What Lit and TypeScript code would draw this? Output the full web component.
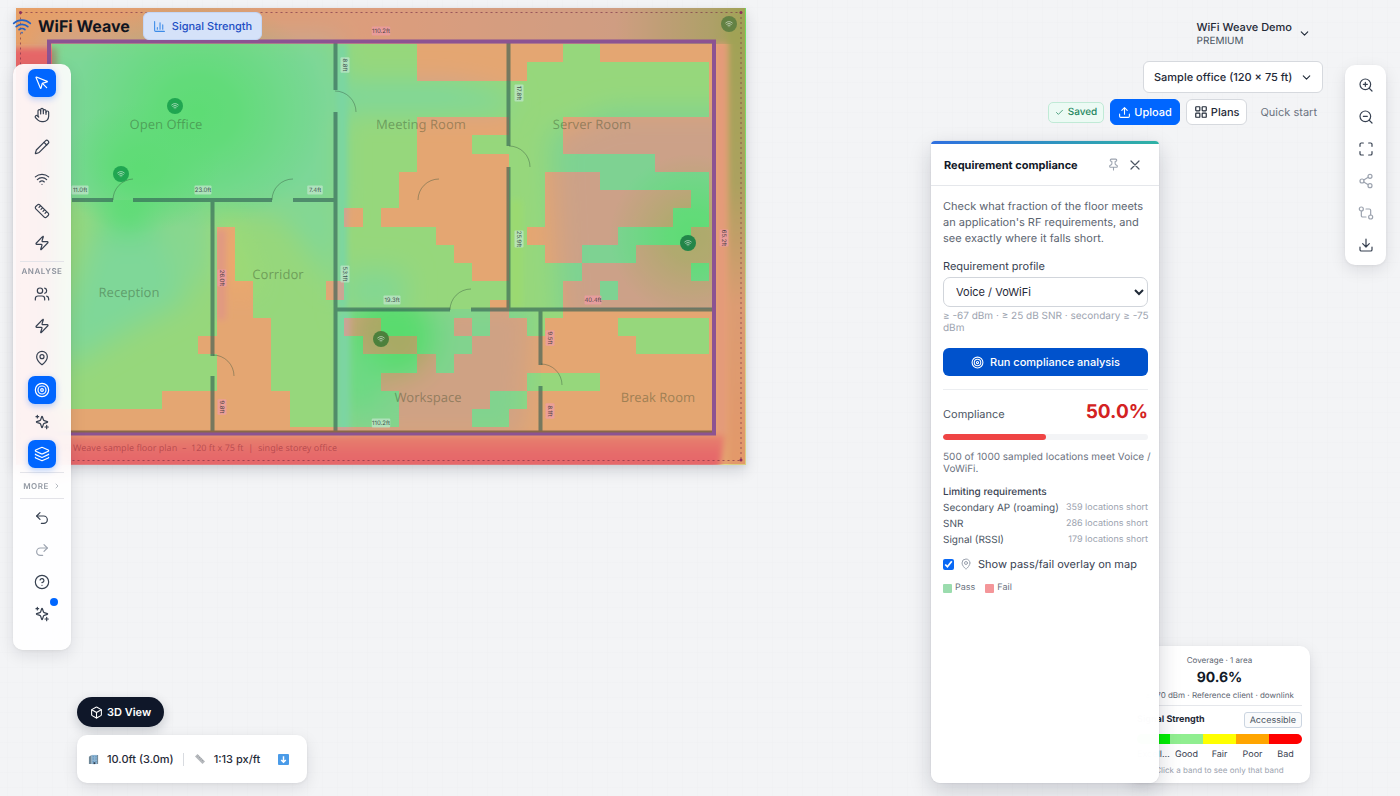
import { LitElement, html, css, svg } from "lit";
import { customElement, property, state } from "lit/decorators.js";
import { classMap } from "lit/directives/class-map.js";

const wifi = svg`<path d="M12 20h.01"/><path d="M2 8.82a15 15 0 0 1 20 0"/><path d="M5 12.86a10 10 0 0 1 14 0"/><path d="M8.5 16.43a5 5 0 0 1 7 0"/>`;

const ICONS: Record<string, unknown> = {
  pointer: svg`<path d="M12.6 12.6 19 19"/><path d="M3.7 3.04a.5.5 0 0 0-.65.65l6.5 16a.5.5 0 0 0 .95-.06l1.57-6.09a2 2 0 0 1 1.45-1.44l6.13-1.58a.5.5 0 0 0 .06-.95z"/>`,
  hand: svg`<path d="M18 11V6a2 2 0 0 0-4 0"/><path d="M14 10V4a2 2 0 0 0-4 0v2"/><path d="M10 10.5V6a2 2 0 0 0-4 0v8"/><path d="M18 8a2 2 0 1 1 4 0v6a8 8 0 0 1-8 8h-2c-2.8 0-4.5-.86-5.99-2.34l-3.6-3.6a2 2 0 0 1 2.83-2.82L7 15"/>`,
  pencil: svg`<path d="M21.17 6.81a1 1 0 0 0-3.99-3.99L3.84 16.17a2 2 0 0 0-.5.83l-1.32 4.35a.5.5 0 0 0 .62.62l4.35-1.32a2 2 0 0 0 .83-.5z"/><path d="m15 5 4 4"/>`,
  wifi,
  ruler: svg`<path d="M2.7 8.7a2.4 2.4 0 0 1 0-3.4l2.6-2.6a2.4 2.4 0 0 1 3.4 0l12.6 12.6a2.4 2.4 0 0 1 0 3.4l-2.6 2.6a2.4 2.4 0 0 1-3.4 0Z"/><path d="m9.5 4.5-2 2M12.5 7.5l-2 2M15.5 10.500l-2 2M18.500 13.500l-2 2"/>`,
  zap: svg`<path d="M4 14a1 1 0 0 1-.78-1.63l9.9-10.2a.5.5 0 0 1 .86.46l-1.92 6.02A1 1 0 0 0 13 10h7a1 1 0 0 1 .78 1.63l-9.9 10.2a.5.5 0 0 1-.86-.46l1.92-6.02A1 1 0 0 0 11 14z"/>`,
  users: svg`<path d="M16 21v-2a4 4 0 0 0-4-4H6a4 4 0 0 0-4 4v2"/><circle cx="9" cy="7" r="4"/><path d="M22 21v-2a4 4 0 0 0-3-3.87M16 3.13a4 4 0 0 1 0 7.75"/>`,
  pin: svg`<path d="M20 10c0 5-5.54 10.2-7.4 11.8a1 1 0 0 1-1.2 0C9.54 20.2 4 15 4 10a8 8 0 0 1 16 0"/><circle cx="12" cy="10" r="3"/>`,
  target: svg`<circle cx="12" cy="12" r="10"/><circle cx="12" cy="12" r="6"/><circle cx="12" cy="12" r="2"/>`,
  sparkles: svg`<path d="M12 3.5c.4 0 .5.3.6.6l1.500 4.600a2 2 0 0 0 1.300 1.300l4.600 1.500c.6.2.6.9 0 1.100l-4.600 1.500a2 2 0 0 0-1.300 1.300l-1.500 4.600c-.2.6-.9.6-1.100 0L10 15.400a2 2 0 0 0-1.300-1.300l-4.600-1.500c-.6-.2-.6-.9 0-1.100L8.700 10A2 2 0 0 0 10 8.700l1.500-4.600c.1-.3.3-.6.5-.6z"/><path d="M5 2v4M3 4h4M19 17v5M16.500 19.500h5"/>`,
  layers: svg`<path d="M12.83 2.18a2 2 0 0 0-1.66 0L2.6 6.08a1 1 0 0 0 0 1.83l8.58 3.91a2 2 0 0 0 1.66 0l8.58-3.9a1 1 0 0 0 0-1.83z"/><path d="M2 12a1 1 0 0 0 .58.91l8.6 3.91a2 2 0 0 0 1.65 0l8.58-3.9A1 1 0 0 0 22 12"/><path d="M2 17a1 1 0 0 0 .58.91l8.6 3.91a2 2 0 0 0 1.65 0l8.58-3.9A1 1 0 0 0 22 17"/>`,
  undo: svg`<path d="M9 14 4 9l5-5"/><path d="M4 9h10.500a5.500 5.500 0 0 1 0 11H11"/>`,
  redo: svg`<path d="m15 14 5-5-5-5"/><path d="M20 9H9.500a5.500 5.500 0 0 0 0 11H13"/>`,
  help: svg`<circle cx="12" cy="12" r="10"/><path d="M9.090 9a3 3 0 0 1 5.830 1c0 2-3 3-3 3M12 17h.01"/>`,
  zoomIn: svg`<circle cx="11" cy="11" r="8"/><path d="m21 21-4.350-4.350M11 8v6M8 11h6"/>`,
  zoomOut: svg`<circle cx="11" cy="11" r="8"/><path d="m21 21-4.350-4.350M8 11h6"/>`,
  fit: svg`<path d="M8 3H5a2 2 0 0 0-2 2v3M21 8V5a2 2 0 0 0-2-2h-3M3 16v3a2 2 0 0 0 2 2h3M16 21h3a2 2 0 0 0 2-2v-3"/>`,
  share: svg`<circle cx="18" cy="5" r="3"/><circle cx="6" cy="12" r="3"/><circle cx="18" cy="19" r="3"/><path d="m8.590 13.510 6.830 3.980M15.410 6.510l-6.820 3.980"/>`,
  compare: svg`<circle cx="5" cy="6" r="3"/><path d="M12 6h5a2 2 0 0 1 2 2v7"/><circle cx="19" cy="18" r="3"/><path d="M12 18H7a2 2 0 0 1-2-2V9"/>`,
  download: svg`<path d="M12 15V3M7 10l5 5 5-5M21 15v4a2 2 0 0 1-2 2H5a2 2 0 0 1-2-2v-4"/>`,
  upload: svg`<path d="M12 3v12M17 8l-5-5-5 5M21 15v4a2 2 0 0 1-2 2H5a2 2 0 0 1-2-2v-4"/>`,
  grid: svg`<rect x="3" y="3" width="7" height="7" rx="1"/><rect x="14" y="3" width="7" height="7" rx="1"/><rect x="14" y="14" width="7" height="7" rx="1"/><rect x="3" y="14" width="7" height="7" rx="1"/>`,
  check: svg`<path d="M20 6 9 17l-5-5"/>`,
  down: svg`<path d="m6 9 6 6 6-6"/>`,
  right: svg`<path d="m9 18 6-6-6-6"/>`,
  close: svg`<path d="M18 6 6 18M6 6l12 12"/>`,
  tack: svg`<path d="M12 17v5M9 10.760a2 2 0 0 1-1.110 1.790l-1.780.9A2 2 0 0 0 5 15.240V16a1 1 0 0 0 1 1h12a1 1 0 0 0 1-1v-.76a2 2 0 0 0-1.110-1.790l-1.780-.9A2 2 0 0 1 15 10.760V7a1 1 0 0 1 1-1 2 2 0 0 0 0-4H8a2 2 0 0 0 0 4 1 1 0 0 1 1 1z"/>`,
  chart: svg`<path d="M3 3v16a2 2 0 0 0 2 2h16M18 17V9M13 17V5M8 17v-3"/>`,
  cube: svg`<path d="M21 8a2 2 0 0 0-1-1.730l-7-4a2 2 0 0 0-2 0l-7 4A2 2 0 0 0 3 8v8a2 2 0 0 0 1 1.730l7 4a2 2 0 0 0 2 0l7-4A2 2 0 0 0 21 16Z"/><path d="m3.300 7 8.700 5 8.700-5M12 22V12"/>`,
};

const icon = (name: string, size = 16, weight = 2) =>
  html`<svg width=${size} height=${size} viewBox="0 0 24 24" fill="none" stroke="currentColor" stroke-width=${weight} stroke-linecap="round" stroke-linejoin="round" aria-hidden="true">${ICONS[name]}</svg>`;

/* Sampled grid: each row lists the [from, to) column ranges that miss the profile. */
const CELL = 18.25;
const GRID_X = 52.4;
const GRID_Y = 44;
const COLS = 36;
const FAILING: number[][][] = [
  [[20, 28], [30, 36]],
  [[20, 26]],
  [],
  [],
  [[20, 25], [28, 36]],
  [[20, 23], [28, 36]],
  [[20, 25], [33, 36]],
  [[19, 25], [27, 30]],
  [[19, 25], [27, 35]],
  [[16, 17], [18, 25], [27, 34]],
  [[9, 10], [21, 25], [26, 31], [35, 36]],
  [[9, 10], [22, 25], [27, 29], [32, 36]],
  [[9, 10], [23, 25], [29, 35]],
  [[9, 11], [15, 16], [28, 30], [31, 36]],
  [[9, 11], [24, 25], [28, 36]],
  [[9, 12], [16, 18], [22, 23], [24, 26], [27, 31]],
  [[8, 12], [17, 20], [23, 32]],
  [[9, 12], [20, 21], [22, 36]],
  [[9, 12], [18, 26], [30, 36]],
  [[6, 13], [19, 24], [26, 36]],
  [[0, 13], [19, 23], [25, 36]],
];

const passPath = FAILING.map((fails, row) => {
  const y = GRID_Y + row * CELL;
  let from = 0;
  let d = "";
  for (const [a, b] of [...fails, [COLS, COLS]]) {
    if (a > from) d += `M${GRID_X + from * CELL} ${y}h${(a - from) * CELL}v${CELL}h${-(a - from) * CELL}z`;
    from = b;
  }
  return d;
}).join("");

const ROOMS: [string, number, number][] = [
  ["Open Office", 166, 129],
  ["Meeting Room", 421, 129],
  ["Server Room", 592, 129],
  ["Reception", 129, 297],
  ["Corridor", 278, 279],
  ["Workspace", 428, 402],
  ["Break Room", 658, 402],
];

const DIMENSIONS: [string, number, number, boolean, boolean][] = [
  ["110.2ft", 381, 31, false, false],
  ["11.0ft", 80, 190, false, true],
  ["23.0ft", 203, 190, false, true],
  ["7.4ft", 315, 190, false, true],
  ["8.8ft", 345, 65, true, true],
  ["17.8ft", 519, 93, true, true],
  ["25.9ft", 519, 239, true, true],
  ["26.0ft", 222, 278, true, false],
  ["53.1ft", 345, 274, true, true],
  ["19.3ft", 392, 300, false, true],
  ["40.4ft", 593, 300, false, false],
  ["65.2ft", 724, 238, true, false],
  ["9.5ft", 550, 338, true, false],
  ["9.8ft", 222, 407, true, false],
  ["8.1ft", 550, 411, true, false],
  ["110.2ft", 381, 423, false, true],
];

const ACCESS_POINTS: [number, number, string][] = [
  [175, 106, "#20a651"],
  [121, 174, "#20a651"],
  [688, 243, "#228549"],
  [381, 339, "#4c803c"],
  [729, 24, "#638143"],
];

@customElement("floor-map")
class FloorMap extends LitElement {
  @property({ type: Boolean }) overlay = true;

  static styles = css`
    :host { display: block; box-shadow: 0 6px 14px rgba(15, 23, 42, .14), 0 2px 5px rgba(15, 23, 42, .06); }
    svg { display: block; text-rendering: geometricPrecision; }
    .room { font: 13px "Noto Sans", sans-serif; fill: rgba(45, 65, 35, .38); text-anchor: middle; }
    .note { font: 9px "Noto Sans", sans-serif; fill: rgba(120, 20, 40, .42); white-space: pre; }
    .dim { font: 6px Inter, sans-serif; fill: rgba(30, 40, 50, .8); text-anchor: middle; }
  `;

  render() {
    return html`<svg width="730" height="457" viewBox="16 8 730 457" role="img" aria-label="Floor plan with pass and fail overlay">
      <defs>
        <filter id="soft" x="-50%" y="-50%" width="200%" height="200%"><feGaussianBlur stdDeviation="14"/></filter>
        <filter id="fine" x="-50%" y="-50%" width="200%" height="200%"><feGaussianBlur stdDeviation="3"/></filter>
        <radialGradient id="strong"><stop offset="0" stop-color="#83ea83"/><stop offset=".3" stop-color="#83ea83" stop-opacity=".85"/><stop offset=".7" stop-color="#83ea83" stop-opacity=".35"/><stop offset="1" stop-color="#83ea83" stop-opacity="0"/></radialGradient>
        <linearGradient id="topBand"><stop offset="0" stop-color="#e2d87c"/><stop offset=".2" stop-color="#d8d48c"/><stop offset=".5" stop-color="#d0d4a0"/><stop offset=".82" stop-color="#bcd4a8"/><stop offset=".95" stop-color="#88d880"/><stop offset="1" stop-color="#70dc60"/></linearGradient>
        <linearGradient id="rightBand" x2="0" y2="1"><stop offset="0" stop-color="#70dc60"/><stop offset=".35" stop-color="#84da70"/><stop offset=".62" stop-color="#d0d290"/><stop offset="1" stop-color="#dccc80"/></linearGradient>
        <linearGradient id="lowBand" x2="0" y2="1"><stop offset="0" stop-color="#e0a888"/><stop offset=".45" stop-color="#e08082"/><stop offset="1" stop-color="#e07a7e"/></linearGradient>
        <clipPath id="server"><rect x="508" y="42" width="207" height="267"/></clipPath>
        <clipPath id="left"><rect x="50" y="200" width="285" height="234"/></clipPath>
        <clipPath id="work"><rect x="335" y="309" width="206" height="125"/></clipPath>
      </defs>
      <rect x="16" y="8" width="730" height="457" fill="#dee38e"/>
      <rect x="16" y="8" width="730" height="36" fill="url(#topBand)"/>
      <g filter="url(#soft)">
        <rect x="40" y="34" width="300" height="176" fill="#b4e2bb"/>
        <path d="M340 84h110l60 12v14H340z" fill="#b0e2c8"/>
        <path d="M345 270h60v42h-60z" fill="#bde2b4"/>
      </g>
      <g clip-path="url(#server)"><g filter="url(#soft)">
        <path d="M550 135l60-25h140v220H560z" fill="#b6dab2"/>
      </g></g>
      <g clip-path="url(#left)"><g filter="url(#soft)">
        <path d="M108 190h46l34 110-60 30L60 370V330z" fill="#b8e2bc"/>
        <path d="M270 200l70 90V200z" fill="#bde2b8"/>
        <path d="M106 186h44v48h-44z" fill="#83ea83"/>
        <path d="M216 190v90l40 10z" fill="#eee880"/>
        <path d="M50 190h30v50l-30 60z" fill="#dfe48c"/>
        <path d="M165 190h45v90h-25z" fill="#c4e2b0"/>
      </g></g>
      <g clip-path="url(#work)"><g filter="url(#soft)">
        <path d="M335 300h200l-10 140H335z" fill="#bcdcac"/>
        <circle cx="392" cy="336" r="44" fill="#7ce878"/>
        <path d="M340 350h40v60h-40z" fill="#98e69a"/>
      </g></g>
      <g clip-path="url(#server)"><circle cx="692" cy="236" r="82" fill="url(#strong)"/></g>
      <ellipse cx="198" cy="112" rx="130" ry="118" fill="url(#strong)"/>
      <ellipse cx="140" cy="168" rx="80" ry="66" fill="url(#strong)"/>
      <g filter="url(#fine)">
        <rect x="337" y="44" width="10" height="265" fill="#b0e0cc"/>
        <rect x="337" y="311" width="13" height="122" fill="#b4dfcc"/>
        <rect x="216" y="230" width="10" height="90" fill="#d8cca8"/>
        <rect x="510" y="200" width="12" height="108" fill="#e6e67c"/>
        <rect x="716" y="44" width="10" height="390" fill="#dfce9c"/>
        <rect x="728" y="26" width="26" height="450" fill="url(#rightBand)"/>
        <path d="M8 48H57V436H8z" fill="#e07c7f"/>
        <path d="M8 435H725L718 480H8z" fill="url(#lowBand)"/>
      </g>
      ${this.overlay
        ? svg`<g shape-rendering="crispEdges"><path d="M16 8H745V464H16z${passPath}" fill="#ef4444" fill-opacity=".38" fill-rule="evenodd"/><path d=${passPath} fill="#22c55e" fill-opacity=".38"/></g>`
        : null}
      <g fill="none" stroke="#2d5a52" stroke-opacity=".6" stroke-width="4">
        <path d="M335.500 43V90M335.500 112V431M72 200H113M133 200H272M293 200H335M212.500 200V356M212.500 376V431M508.500 43V146M508.500 167V309M337 309.500H450M471 309.500H714M540.500 311V365M540.500 386V431"/>
      </g>
      <g fill="none" stroke="#32503c" stroke-opacity=".4">
        <path d="M335 91a21 21 0 0 1 21 21M113 200a21 21 0 0 1 20-21M272 200a21 21 0 0 1 21-21M418 200a21 21 0 0 1 21-21M509 146a21 21 0 0 1 21 21M213 355a21 21 0 0 1 21 21M450 310a21 21 0 0 1 21-21M541 364a21 21 0 0 1 21 21"/>
      </g>
      <rect x="49" y="41.500" width="665" height="392" fill="none" stroke="#8c5392" stroke-width="4"/>
      <path d="M52 431.500H712" stroke="#8a6848" stroke-width="2"/>
      <rect x="20.500" y="12.500" width="720.500" height="448" fill="none" stroke="#7a3048" stroke-opacity=".65" stroke-dasharray="2 3"/>
      <g fill="#8c2f5c"><circle cx="20.500" cy="12.500" r="1.500"/><circle cx="741" cy="12.500" r="1.500"/><circle cx="741" cy="460" r="1.500"/></g>
      ${ROOMS.map(([name, x, y]) => svg`<text class="room" x=${x} y=${y}>${name}</text>`)}
      <text class="note" x="53" y="451">WiFi Weave sample floor plan  –  120 ft x 75 ft  |  single storey office</text>
      ${DIMENSIONS.map(([label, x, y, upright, pass]) => svg`<g transform="translate(${x} ${y})${upright ? " rotate(90)" : ""}">
        <rect x=${-4 - label.length * 0.75} y="-4.500" width=${8 + label.length * 1.5} height="9" rx="1" fill=${pass ? "#bfe6c9" : "#ee9ca4"} fill-opacity=".75"/>
        <text class="dim" y="2">${label}</text></g>`)}
      ${ACCESS_POINTS.map(([x, y, fill]) => svg`<g transform="translate(${x} ${y})">
        <circle r="8" fill=${fill}/>
        <g transform="translate(-4 -4) scale(.333)" fill="none" stroke="#fff" stroke-opacity=".65" stroke-width="2.400" stroke-linecap="round">${wifi}</g></g>`)}
    </svg>`;
  }
}

@customElement("compliance-panel")
class CompliancePanel extends LitElement {
  @property({ type: Boolean }) overlay = true;
  @property({ type: Number }) score = 50;

  static styles = css`
    :host { display: flex; flex-direction: column; background: rgba(255, 255, 255, .99); border-radius: 4px 4px 9px 9px; box-shadow: 0 8px 22px rgba(15, 23, 42, .18), 0 0 2px rgba(15, 23, 42, .12); overflow: hidden; color: #4b5563; font: 11px/16px Inter, sans-serif; }
    * { box-sizing: border-box; }
    .strip { height: 3px; background: linear-gradient(90deg, #2f6fe0, #2fb2a5); }
    header { display: flex; align-items: center; height: 42px; padding: 0 13px; border-bottom: 1px solid #e5e7eb; }
    h2 { flex: 1; margin: 0; font-size: 11px; font-weight: 700; color: #111827; }
    .tool { display: grid; place-items: center; width: 22px; height: 22px; padding: 0; border: 0; background: none; color: #9ca3af; }
    .tool.close { color: #4b5563; }
    .body { padding: 12px 11px 12px 12px; display: flex; flex-direction: column; }
    p { margin: 0; }
    .intro { color: #5b6470; }
    .label { margin-top: 12px; color: #374151; }
    .profile { height: 30px; margin-top: 3px; width: 100%; padding: 0 0 0 8px; border: 1px solid #d1d5db; border-radius: 7px; background: #fff; color: #1f2937; font: 11px Inter, sans-serif; }
    .small { margin-right: -6px; font-size: 10px; line-height: 12px; }
    .hint { margin-top: 3px; color: #9ca3af; }
    .run { display: flex; align-items: center; justify-content: center; gap: 6px; height: 28px; margin-top: 14px; border: 0; border-radius: 6px; background: #0052cc; color: #fff; font: 500 11px Inter, sans-serif; }
    .result { margin-top: 13px; padding-top: 10px; border-top: 1px solid #eceef1; }
    .row { display: flex; justify-content: space-between; align-items: baseline; white-space: nowrap; }
    .score { font-size: 19px; line-height: 24px; font-weight: 700; color: #d32222; }
    .bar { height: 6px; margin: 10px 0 11px; border-radius: 3px; background: #f3f4f6; overflow: hidden; }
    .fill { height: 6px; border-radius: 3px; background: #ef4444; }
    .meta { color: #6b7280; }
    .limits { margin-top: 9px; font-size: 10px; line-height: 16px; }
    .limits .row { align-items: center; }
    .limits h3 { margin: 0; font-size: 10px; line-height: 16px; font-weight: 500; color: #374151; }
    .short { font-size: 9px; color: #9ca3af; }
    .toggle { display: flex; align-items: center; gap: 6px; margin-top: 8px; color: #374151; white-space: nowrap; }
    .toggle svg { color: #9ca3af; }
    .toggle input { width: 11px; height: 11px; margin: 0; accent-color: #0969f5; }
    .legend { display: flex; gap: 10px; margin-top: 10px; font-size: 9px; line-height: 12px; color: #6b7280; }
    .legend span { display: flex; align-items: center; gap: 3px; }
    .legend i { width: 9px; height: 9px; border-radius: 1px; background: #9bdcae; }
    .legend .fail { background: #f49699; }
  `;

  private toggle(event: Event) {
    const detail = (event.target as HTMLInputElement).checked;
    this.dispatchEvent(new CustomEvent("overlay-change", { detail }));
  }

  render() {
    const limits = [["Secondary AP (roaming)", 359], ["SNR", 286], ["Signal (RSSI)", 179]];
    return html`
      <div class="strip"></div>
      <header>
        <h2>Requirement compliance</h2>
        <button class="tool" aria-label="Pin panel">${icon("tack", 13)}</button>
        <button class="tool close" aria-label="Close panel">${icon("close", 16, 1.8)}</button>
      </header>
      <div class="body">
        <p class="intro">Check what fraction of the floor meets an application's RF requirements, and see exactly where it falls short.</p>
        <label class="label" for="profile">Requirement profile</label>
        <select class="profile" id="profile"><option>Voice / VoWiFi</option></select>
        <p class="small hint">≥ -67 dBm · ≥ 25 dB SNR · secondary ≥ -75 dBm</p>
        <button class="run">${icon("target", 13)}Run compliance analysis</button>
        <section class="result">
          <div class="row"><span>Compliance</span><span class="score">${this.score.toFixed(1)}%</span></div>
          <div class="bar"><div class="fill" style="width:${this.score}%"></div></div>
          <p class="small meta">500 of 1000 sampled locations meet Voice / VoWiFi.</p>
          <div class="limits">
            <h3>Limiting requirements</h3>
            ${limits.map(([name, count]) => html`<div class="row"><span>${name}</span><span class="short">${count} locations short</span></div>`)}
          </div>
          <label class="toggle"><input type="checkbox" .checked=${this.overlay} @change=${this.toggle} />${icon("pin", 12)}Show pass/fail overlay on map</label>
          <div class="legend"><span><i></i>Pass</span><span><i class="fail"></i>Fail</span></div>
        </section>
      </div>`;
  }
}

@customElement("app-root")
class AppRoot extends LitElement {
  @state() private overlay = true;

  static styles = css`
    :host { display: block; position: relative; min-height: 100vh; overflow: hidden; color: #1f2937; font: 11px/16px Inter, sans-serif; text-rendering: geometricPrecision;
      background: linear-gradient(rgba(15, 23, 42, .009) 1px, transparent 1px) 0 7px / 15px 15px, linear-gradient(90deg, rgba(15, 23, 42, .009) 1px, transparent 1px) 7px 0 / 15px 15px, #f3f4f6; }
    * { box-sizing: border-box; }
    button, select { font: 500 11px Inter, sans-serif; color: inherit; text-rendering: inherit; }
    .map { position: absolute; left: 16px; top: 8px; }
    .brand { position: absolute; left: 12px; top: 12px; display: flex; align-items: center; }
    .brand > svg { color: #2563c4; }
    .brand h1 { margin: 0 13px 0 6px; font-size: 16px; line-height: 28px; font-weight: 700; color: #10151f; }
    .mode { display: flex; align-items: center; gap: 6px; height: 28px; padding: 0 9px; border: 1px solid #c3d6f6; border-radius: 6px; background: #d5e2f9; color: #1d4fc4; }
    .mode svg { color: #3b8be8; }

    .card { background: #fff; border-radius: 10px; box-shadow: 0 5px 16px rgba(15, 23, 42, .1), 0 1px 3px rgba(15, 23, 42, .06); }
    .rail { position: absolute; display: flex; flex-direction: column; align-items: center; gap: 4px; }
    .left { left: 13px; top: 64px; width: 58px; padding: 5px 0 22px; background: rgba(255, 255, 255, .91); backdrop-filter: blur(12px); }
    .right { right: 14px; top: 65px; width: 41px; padding: 6px 0; }
    .rail button { display: grid; place-items: center; position: relative; width: 28px; height: 28px; padding: 0; border: 0; border-radius: 7px; background: none; color: #374151; }
    .rail button.on { background: #0066ff; color: #fff; box-shadow: 0 2px 6px rgba(0, 102, 255, .3); }
    .rail button.dim { color: #9ca3af; }
    .rail hr { width: 44px; height: 1px; margin: 0; border: 0; background: #e3e3e8; }
    .group { font-size: 8px; line-height: 10px; font-weight: 600; letter-spacing: .5px; color: #8b919c; }
    .rail .more { display: flex; align-items: center; justify-content: center; gap: 4px; width: 44px; height: 17px; font: 600 8px Inter, sans-serif; letter-spacing: .5px; color: #9298a2; }
    .dot { position: absolute; right: -2px; top: -2px; width: 8px; height: 8px; border-radius: 50%; background: #0066ff; }
    .left hr.last { margin-bottom: 1px; }

    .top { position: absolute; right: 77px; top: 19px; display: flex; flex-direction: column; align-items: flex-end; gap: 6px; }
    .account { display: flex; align-items: center; gap: 6px; margin: 0 12px 8px 0; padding: 0; border: 0; background: none; text-align: left; line-height: 16px; }
    .account small { display: block; font-size: 10px; line-height: 12px; font-weight: 400; color: #4b5563; }
    .plan { position: relative; display: block; }
    .plan select { appearance: none; height: 32px; width: 180px; padding: 0 10px 0 10px; border: 1px solid #d6d9de; border-radius: 6px; background: #fff; }
    .plan svg { position: absolute; right: 10px; top: 10px; pointer-events: none; }
    .actions { display: flex; align-items: center; gap: 6px; }
    .saved { display: flex; align-items: center; gap: 4px; height: 21px; padding: 0 6px; border: 1px solid #c0ead6; border-radius: 5px; background: #ecfaf4; color: #24875f; font-size: 10px; font-weight: 500; }
    .actions button { display: flex; align-items: center; gap: 3px; height: 26px; padding: 0 7px; border: 1px solid #d6d9de; border-radius: 6px; background: #fff; }
    .actions button.primary { background: #0066ff; border-color: #0066ff; color: #fff; }
    .actions a { padding: 0 6px 0 7px; color: #6b7280; text-decoration: none; }

    .panel { position: absolute; right: 241px; top: 141px; bottom: 13px; width: 228px; }
    .coverage { position: absolute; right: 90px; bottom: 13px; width: 181px; padding: 8px 8px 7px; text-align: center; }
    .coverage p { margin: 0; font-size: 8px; line-height: 12px; color: #5b6470; white-space: nowrap; }
    .coverage strong { display: block; font-size: 14px; line-height: 23px; font-weight: 700; color: #111827; }
    .coverage header { display: flex; align-items: center; justify-content: space-between; margin: 4px 0 6px; padding-top: 6px; border-top: 1px solid #e5e7eb; font-size: 9px; font-weight: 700; }
    .coverage header button { height: 16px; padding: 0 5px; border: 1px solid #cbd5e1; border-radius: 3px; background: #fafbfc; color: #4b5563; font-size: 9px; font-weight: 400; }
    .bands { display: grid; grid-template-columns: repeat(5, 1fr); height: 10px; border-radius: 5px; overflow: hidden; }
    .b0 { background: #00ee00; } .b1 { background: #90ee90; } .b2 { background: #ff0; } .b3 { background: #ffa500; } .b4 { background: #f00; }
    .names { display: grid; grid-template-columns: repeat(5, 1fr); margin: 5px 0 3px; font-size: 9px; line-height: 12px; color: #374151; }
    .names span { overflow: hidden; text-overflow: ellipsis; min-width: 0; }
    .coverage p.tip { color: #9ca3af; }

    .bottom { position: absolute; left: 77px; bottom: 13px; display: flex; flex-direction: column; align-items: flex-start; gap: 8px; }
    .view { display: flex; align-items: center; gap: 4px; height: 30px; padding: 0 13px; border: 0; border-radius: 15px; background: #0f1729; color: #fff; font-weight: 600; box-shadow: 0 4px 12px rgba(15, 23, 42, .2); }
    .status { display: flex; align-items: center; height: 48px; padding: 0 18px 0 11px; font-weight: 500; }
    .status span { margin-left: 8px; }
    .status .sep { width: 1px; height: 13px; margin: 0 10px 0 9px; background: #d8dbe0; }
    .status button { display: flex; margin-left: 18px; padding: 0; border: 0; background: none; }
  `;

  private tool(name: string, label: string, cls = "") {
    return html`<button class=${classMap({ on: cls === "on", dim: cls === "dim" })} aria-label=${label} ?disabled=${cls === "dim"}>${icon(name, 16, 1.8)}</button>`;
  }

  render() {
    return html`
      <floor-map class="map" .overlay=${this.overlay}></floor-map>

      <div class="brand">
        ${icon("wifi", 20, 2)}
        <h1>WiFi Weave</h1>
        <button class="mode">${icon("chart", 13)}Signal Strength</button>
      </div>

      <nav class="rail left card" aria-label="Tools">
        ${this.tool("pointer", "Select", "on")} ${this.tool("hand", "Pan")} ${this.tool("pencil", "Draw wall")}
        ${this.tool("wifi", "Access point")} ${this.tool("ruler", "Measure")} ${this.tool("zap", "Quick action")}
        <hr />
        <div class="group">ANALYSE</div>
        ${this.tool("users", "Capacity")} ${this.tool("zap", "Interference")} ${this.tool("pin", "Locations")}
        ${this.tool("target", "Compliance", "on")} ${this.tool("sparkles", "Optimise")} ${this.tool("layers", "Layers", "on")}
        <hr />
        <button class="more">MORE ${icon("right", 8)}</button>
        <hr class="last" />
        ${this.tool("undo", "Undo")} ${this.tool("redo", "Redo", "dim")} ${this.tool("help", "Help")}
        <button aria-label="What's new">${icon("sparkles", 16, 1.8)}<span class="dot"></span></button>
      </nav>

      <div class="top">
        <button class="account"><span>WiFi Weave Demo<small>PREMIUM</small></span>${icon("down", 13)}</button>
        <label class="plan"><select aria-label="Floor plan"><option>Sample office (120 × 75 ft)</option></select>${icon("down", 13)}</label>
        <div class="actions">
          <span class="saved">${icon("check", 9)}Saved</span>
          <button class="primary">${icon("upload", 13)}Upload</button>
          <button>${icon("grid", 14)}Plans</button>
          <a href="#start">Quick start</a>
        </div>
      </div>

      <nav class="rail right card" aria-label="View">
        ${this.tool("zoomIn", "Zoom in")} ${this.tool("zoomOut", "Zoom out")} ${this.tool("fit", "Fit to screen")}
        ${this.tool("share", "Share", "dim")} ${this.tool("compare", "Compare", "dim")} ${this.tool("download", "Download")}
      </nav>

      <section class="coverage card">
        <p>Coverage · 1 area</p>
        <strong>90.6%</strong>
        <p>≥ -70 dBm · Reference client · downlink</p>
        <header><span>Signal Strength</span><button>Accessible</button></header>
        <div class="bands"><i class="b0"></i><i class="b1"></i><i class="b2"></i><i class="b3"></i><i class="b4"></i></div>
        <div class="names"><span>Excellent</span><span>Good</span><span>Fair</span><span>Poor</span><span>Bad</span></div>
        <p class="tip">Click a band to see only that band</p>
      </section>

      <compliance-panel class="panel" .overlay=${this.overlay} @overlay-change=${(e: CustomEvent) => (this.overlay = e.detail)}></compliance-panel>

      <div class="bottom">
        <button class="view">${icon("cube", 13)}3D View</button>
        <div class="status card">
          <svg width="11" height="11" viewBox="0 0 12 12" aria-hidden="true"><path d="M1 3 4 1v10H1z" fill="#6f8797"/><path d="M4 1h6v10H4z" fill="#8db4d2"/><path d="M10 1h1v10h-1z" fill="#607888"/><path d="M5 2.500h1.500v1H5zm3 0h1.500v1H8zM5 5h1.500v1H5zm3 0h1.500v1H8zM5 7.500h1.500v1H5zm3 0h1.500v1H8z" fill="#5d8fb8"/><path d="M6 9h2v2H6z" fill="#2f3f50"/></svg>
          <span>10.0ft (3.0m)</span>
          <i class="sep"></i>
          <svg width="12" height="12" viewBox="0 0 12 12" aria-hidden="true"><path d="M1 3.500 3.500 1 11 8.500 8.500 11z" fill="#b5b8bc"/><path d="m4.500 2.500-1 1m2.500.5-1 1m2.500.5-1 1m2.500.5-1 1" stroke="#8c9096" stroke-width=".6"/></svg>
          <span>1:13 px/ft</span>
          <button aria-label="Lower floor"><svg width="11" height="11" viewBox="0 0 12 12" aria-hidden="true"><rect width="12" height="12" rx="1" fill="#4a9be8"/><path d="M6 2.500v6M3.500 6.500 6 9l2.500-2.500" fill="none" stroke="#fff" stroke-width="1.600"/></svg></button>
        </div>
      </div>`;
  }
}
